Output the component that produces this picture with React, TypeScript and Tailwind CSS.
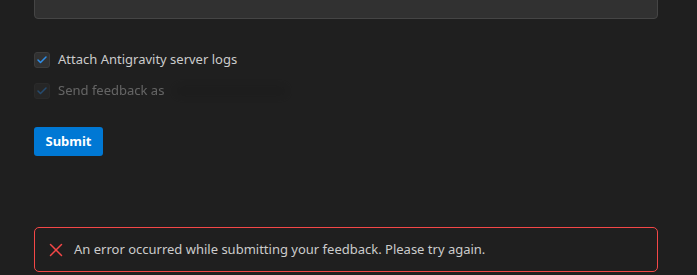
import { Check, X } from 'lucide-react';

export default function App() {
  return (
    <div
      className="w-[697px] h-[275px] overflow-hidden bg-[#1f1f1f] text-[#cccccc] text-[13px]"
      style={{ fontFamily: '"Noto Sans", "Open Sans", sans-serif' }}
    >
      <div className="pl-[34px] pr-[39px] -mt-[40px]">
        {/* Feedback textarea (scrolled, only bottom visible) */}
        <div className="h-[59px] rounded-[4px] border border-[#454545] bg-[#313131]" />

        {/* Options */}
        <div className="mt-[33px] flex flex-col gap-[15px]">
          <label className="flex items-center gap-[8px] h-[16px]">
            <span className="w-[16px] h-[16px] rounded-[3px] border border-[#3c3c3c] bg-[#313131] flex items-center justify-center">
              <Check className="w-[12px] h-[12px] text-[#2f8ee8]" strokeWidth={3} />
            </span>
            <span>Attach Antigravity server logs</span>
          </label>
          <label className="flex items-center gap-[8px] h-[16px] opacity-40">
            <span className="w-[16px] h-[16px] rounded-[3px] border border-[#3c3c3c] bg-[#313131] flex items-center justify-center">
              <Check className="w-[12px] h-[12px] text-[#2f8ee8]" strokeWidth={3} />
            </span>
            <span>Send feedback as</span>
            <span className="ml-1 w-[110px] h-[10px] rounded-full bg-[#1a1a1a] blur-[3px]" />
          </label>
        </div>

        {/* Submit */}
        <button className="mt-[28px] h-[29px] w-[69px] rounded-[3px] bg-[#0078d4] text-white font-bold text-[13px]">
          Submit
        </button>

        {/* Error banner */}
        <div className="mt-[71px] h-[45px] rounded-[5px] border border-[#f44747] flex items-center pl-[10px] gap-[7px]">
          <X className="w-[22px] h-[22px] text-[#f44747]" strokeWidth={1.6} />
          <span>An error occurred while submitting your feedback. Please try again.</span>
        </div>
      </div>
    </div>
  );
}
